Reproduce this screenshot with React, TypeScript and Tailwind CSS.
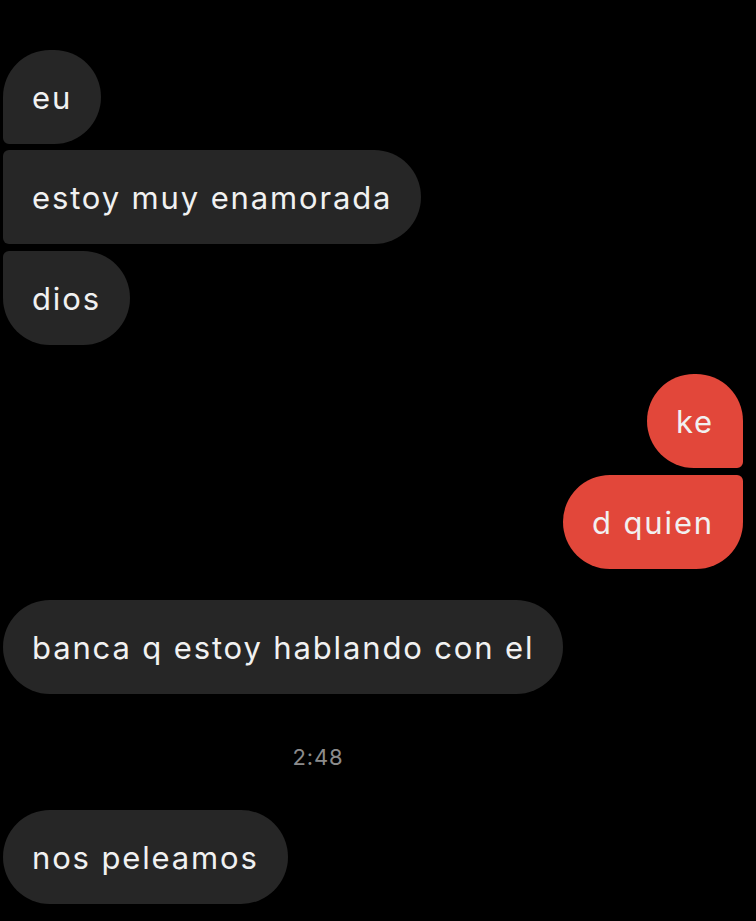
import React from 'react';

type Msg = {text: string; side: 'in' | 'out'; shape: string; mt: string};

const messages: Msg[] = [
  {text: 'eu', side: 'in', shape: 'rounded-[47px] rounded-bl-[6px]', mt: 'mt-0'},
  {text: 'estoy muy enamorada', side: 'in', shape: 'rounded-[47px] rounded-tl-[6px] rounded-bl-[6px]', mt: 'mt-[6px]'},
  {text: 'dios', side: 'in', shape: 'rounded-[47px] rounded-tl-[6px]', mt: 'mt-[7px]'},
  {text: 'ke', side: 'out', shape: 'rounded-[47px] rounded-br-[6px]', mt: 'mt-[29px]'},
  {text: 'd quien', side: 'out', shape: 'rounded-[47px] rounded-tr-[6px]', mt: 'mt-[7px]'},
  {text: 'banca q estoy hablando con el', side: 'in', shape: 'rounded-[47px]', mt: 'mt-[31px]'}
];

function Bubble({msg}: {msg: Msg}) {
  const out = msg.side === 'out';
  return (
    <div className={`flex ${out ? 'justify-end' : 'justify-start'} ${msg.mt}`}>
      <div
        className={`flex h-[94px] items-center px-[29px] ${msg.shape} ${
          out ? 'bg-[#e2473a]' : 'bg-[#262626]'
        }`}
      >
        <span className="text-[31px] leading-none tracking-[0.06em] text-[#f1f1f1]">{msg.text}</span>
      </div>
    </div>
  );
}

export default function App() {
  return (
    <div
      className="h-[921px] w-[756px] overflow-hidden bg-black pl-[3px] pr-[13px] pt-[50px]"
      style={{fontFamily: 'Inter, "Liberation Sans", sans-serif'}}
    >
      {messages.map((m, i) => (
        <Bubble key={i} msg={m} />
      ))}
      <div className="mt-[52px] w-[630px] text-center text-[22px] leading-none tracking-[0.04em] text-[#8c8c8c]">
        2:48
      </div>
      <div className="mt-[42px] flex">
        <div className="flex h-[94px] items-center rounded-[47px] bg-[#262626] px-[29px]">
          <span className="text-[31px] leading-none tracking-[0.06em] text-[#f1f1f1]">nos peleamos</span>
        </div>
      </div>
    </div>
  );
}
